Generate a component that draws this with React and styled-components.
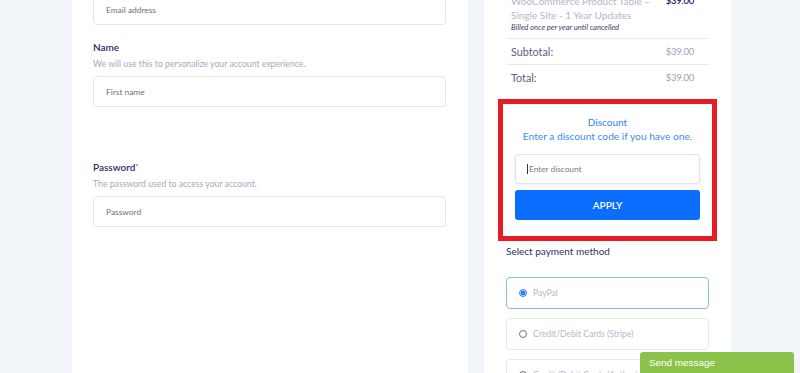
import styled, { createGlobalStyle } from "styled-components";

const GlobalStyle = createGlobalStyle`
  html, body {
    margin: 0;
    padding: 0;
    height: 100%;
    overflow: hidden;
    background: #f2f6fb;
    font-family: "Lato", "Noto Sans", sans-serif;
  }
`;

const Page = styled.div`
  display: flex;
  gap: 16px;
  padding-left: 72px;
  margin-top: -30px;
  height: 440px;
`;

const LeftPanel = styled.div`
  width: 396px;
  background: #fff;
  padding: 24px 22px 0 21px;
  box-sizing: border-box;
  display: flex;
  flex-direction: column;
`;

const RightPanel = styled.div`
  width: 247px;
  background: #fff;
  padding: 14px 22px 0;
  box-sizing: border-box;
  display: flex;
  flex-direction: column;
`;

const Field = styled.div`
  display: flex;
  flex-direction: column;
  margin-top: ${(p) => p.$gap || 0}px;
`;

const Label = styled.div`
  font-size: 10px;
  line-height: 14px;
  font-weight: 600;
  color: #2a2d6a;
`;

const Star = styled.span`
  color: #e0433c;
  font-size: 7px;
  vertical-align: top;
`;

const Help = styled.div`
  font-size: 8.7px;
  line-height: 12px;
  color: #a5a9bf;
  margin-top: 4px;
  margin-bottom: 6px;
`;

const Input = styled.div`
  height: 31px;
  border: 1px solid #e3e5ee;
  border-radius: 4px;
  box-sizing: border-box;
  display: flex;
  align-items: center;
  padding-left: 12px;
  font-size: 8.4px;
  color: #6d7080;
`;

const ProductRow = styled.div`
  display: flex;
  justify-content: space-between;
  padding: 10px 15px 6px 5px;
  border-bottom: 1px solid #e8eaf1;
`;

const ProductInfo = styled.div`
  display: flex;
  flex-direction: column;
`;

const ProductTitle = styled.div`
  font-size: 10px;
  line-height: 14px;
  color: #b4b7ca;
  width: 150px;
`;

const Billed = styled.div`
  font-size: 7.6px;
  line-height: 10px;
  font-style: italic;
  color: #3c3f6a;
`;

const ProductPrice = styled.div`
  font-size: 9.6px;
  line-height: 14px;
  font-weight: 600;
  letter-spacing: -0.3px;
  color: #26295f;
`;

const SummaryRow = styled.div`
  display: flex;
  justify-content: space-between;
  align-items: center;
  height: 25px;
  padding: 0 15px 0 5px;
  border-bottom: ${(p) => (p.$last ? "none" : "1px solid #e8eaf1")};
`;

const SummaryLabel = styled.span`
  font-size: 10.8px;
  color: #5a5e86;
`;

const SummaryValue = styled.span`
  font-size: 9.6px;
  letter-spacing: -0.3px;
  color: #a0a4bb;
`;

const Highlight = styled.div`
  margin: 9px -8px 0;
  border: 5px solid #ea1c24;
`;

const DiscountCard = styled.div`
  padding: 11px 12px 16px;
  display: flex;
  flex-direction: column;
  box-shadow: 0 0 8px rgba(40, 60, 120, 0.06);
`;

const DiscountTitle = styled.div`
  text-align: center;
  font-size: 10px;
  line-height: 14px;
  color: #2f80ee;
`;

const DiscountText = styled.div`
  text-align: center;
  font-size: 10.2px;
  line-height: 14px;
  color: #3d8cf2;
  margin-bottom: 11px;
`;

const DiscountInput = styled.div`
  height: 30px;
  border: 1px solid #dfe2ec;
  border-radius: 3px;
  box-sizing: border-box;
  display: flex;
  align-items: center;
  padding-left: 11px;
  font-size: 8.3px;
  color: #777a88;
  box-shadow: 0 2px 6px rgba(30, 40, 90, 0.06);
`;

const Caret = styled.span`
  display: inline-block;
  width: 1px;
  height: 10px;
  background: #333;
  margin-right: 1px;
`;

const ApplyButton = styled.div`
  margin-top: 6px;
  height: 30px;
  background: #0a6dfd;
  border-radius: 3px;
  display: flex;
  align-items: center;
  justify-content: center;
  color: #fff;
  font-size: 10px;
  font-weight: 600;
`;

const PaymentHeading = styled.div`
  margin-top: 3px;
  font-size: 10px;
  line-height: 14px;
  color: #2c2f62;
  margin-bottom: 19px;
`;

const Method = styled.div`
  height: 32px;
  border: 1px solid ${(p) => (p.$active ? "#8db8f6" : "#e6e8ef")};
  border-radius: 4px;
  box-sizing: border-box;
  display: flex;
  align-items: center;
  padding-left: 12px;
  gap: 6px;
  margin-bottom: 9px;
  font-size: 8.6px;
  color: #b5b8cb;
`;

const Radio = styled.span`
  width: 8px;
  height: 8px;
  border-radius: 50%;
  box-sizing: border-box;
  border: 1px solid ${(p) => (p.$checked ? "#2d7ff9" : "#6f717a")};
  background: ${(p) =>
    p.$checked ? "radial-gradient(circle, #2d7ff9 0 2.2px, #d7e6fd 2.6px)" : "#fff"};
`;

const SendMessage = styled.div`
  position: fixed;
  left: 640px;
  top: 352px;
  width: 154px;
  height: 31px;
  background: #8bc34a;
  border-radius: 3px 3px 0 0;
  box-sizing: border-box;
  padding: 5px 0 0 9px;
  font-family: "Liberation Sans", Arial, sans-serif;
  font-size: 9.9px;
  line-height: 12px;
  color: #fff;
`;

export default function App() {
  return (
    <>
      <GlobalStyle />
      <Page>
        <LeftPanel>
          <Input>Email address</Input>
          <Field $gap={15}>
            <Label>Name</Label>
            <Help>We will use this to personalize your account experience.</Help>
            <Input>First name</Input>
          </Field>
          <Field $gap={53}>
            <Label>
              Password<Star>*</Star>
            </Label>
            <Help>The password used to access your account.</Help>
            <Input>Password</Input>
          </Field>
        </LeftPanel>

        <RightPanel>
          <ProductRow>
            <ProductInfo>
              <ProductTitle>WooCommerce Product Table – Single Site - 1 Year Updates</ProductTitle>
              <Billed>Billed once per year until cancelled</Billed>
            </ProductInfo>
            <ProductPrice>$39.00</ProductPrice>
          </ProductRow>
          <SummaryRow>
            <SummaryLabel>Subtotal:</SummaryLabel>
            <SummaryValue>$39.00</SummaryValue>
          </SummaryRow>
          <SummaryRow $last>
            <SummaryLabel>Total:</SummaryLabel>
            <SummaryValue>$39.00</SummaryValue>
          </SummaryRow>

          <Highlight>
            <DiscountCard>
              <DiscountTitle>Discount</DiscountTitle>
              <DiscountText>Enter a discount code if you have one.</DiscountText>
              <DiscountInput>
                <Caret />
                Enter discount
              </DiscountInput>
              <ApplyButton>APPLY</ApplyButton>
            </DiscountCard>
          </Highlight>

          <PaymentHeading>Select payment method</PaymentHeading>
          <Method $active>
            <Radio $checked />
            PayPal
          </Method>
          <Method>
            <Radio />
            Credit/Debit Cards (Stripe)
          </Method>
          <Method>
            <Radio />
            Credit/Debit Cards (Authorize.Net)
          </Method>
        </RightPanel>
      </Page>
      <SendMessage>Send message</SendMessage>
    </>
  );
}
